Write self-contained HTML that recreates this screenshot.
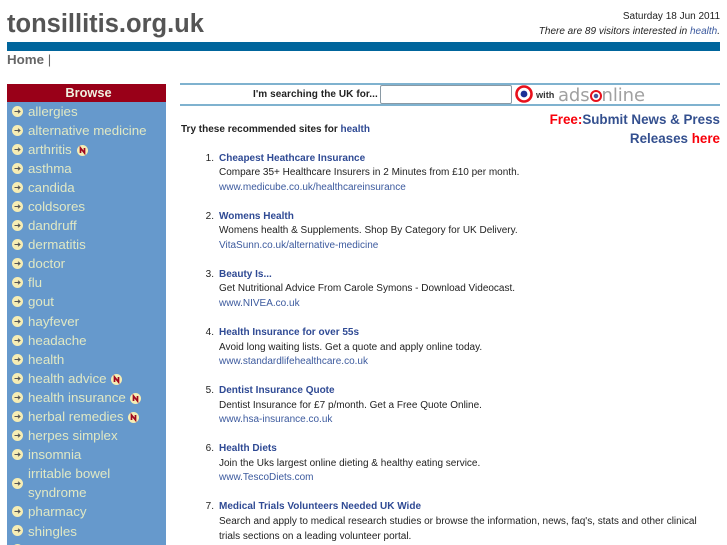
<!DOCTYPE html>
<html><head><meta charset="utf-8"><style>
html,body{margin:0;padding:0;background:#fff;width:727px;height:545px;overflow:hidden;font-family:"Liberation Sans",sans-serif;color:#222}
.a{position:absolute;white-space:nowrap}
#wrap{position:relative;width:727px;height:545px;overflow:hidden}
.s{position:absolute;left:28px;font-size:13.33px;line-height:19px;color:#e0e8c4;white-space:nowrap}
.ic{position:absolute;left:12px;width:11px;height:11px}
.n{position:absolute;width:11px;height:11px}
.t{position:absolute;left:219px;font-size:10px;line-height:14px;font-weight:bold;color:#2f4a94;white-space:nowrap}
.d{position:absolute;left:219px;font-size:10px;line-height:14px;color:#222;white-space:nowrap}
.u{position:absolute;left:219px;font-size:10px;line-height:14px;color:#3c5a9e;white-space:nowrap}
.m{position:absolute;left:190px;width:24px;text-align:right;font-size:10px;line-height:14px;color:#222}
</style></head><body><div id="wrap">
<svg width="0" height="0" style="position:absolute"><defs>
<symbol id="arr" viewBox="0 0 11 11"><circle cx="5.5" cy="5.5" r="5.5" fill="#f6edb4"/><path d="M2.5 5.5H8M6 3.7L8 5.5L6 7.3" fill="none" stroke="#555" stroke-width="1"/></symbol>
<symbol id="new" viewBox="0 0 11 11"><circle cx="5.5" cy="5.5" r="5.5" fill="#f6edb4"/><path d="M3.5 8V3L7.5 8V3" fill="none" stroke="#a00820" stroke-width="1.7"/></symbol>
</defs></svg>

<div class="a" style="left:7px;top:9px;font-size:25.5px;line-height:30px;font-weight:bold;color:#555">tonsillitis.org.uk</div>
<div class="a" style="right:7px;top:10px;font-size:10px;line-height:14px;color:#222">Saturday 18 Jun 2011</div>
<div class="a" style="right:7px;top:25px;font-size:10px;line-height:14px;font-style:italic;color:#222">There are 89 visitors interested in <span style="color:#3c5a9e">health</span>.</div>
<div class="a" style="left:7px;top:42px;width:713px;height:9px;background:#00659c"></div>
<div class="a" style="left:7px;top:52px;font-size:13.33px;line-height:16px;font-weight:bold;color:#666">Home <span style="font-weight:normal">|</span></div>

<div class="a" style="left:7px;top:84px;width:159px;height:461px;background:#6699cc"></div>
<div class="a" style="left:7px;top:84px;width:155px;padding-left:4px;height:18px;background:#990018;color:#f0f0e0;font-size:12.8px;line-height:18px;font-weight:bold;text-align:center">Browse</div>

<div class="s" style="top:102px">allergies</div><svg class="ic" style="top:106px"><use href="#arr"/></svg>
<div class="s" style="top:121px">alternative medicine</div><svg class="ic" style="top:125px"><use href="#arr"/></svg>
<div class="s" style="top:140px">arthritis</div><svg class="ic" style="top:144px"><use href="#arr"/></svg><svg class="n" style="left:77px;top:145px"><use href="#new"/></svg>
<div class="s" style="top:159px">asthma</div><svg class="ic" style="top:163px"><use href="#arr"/></svg>
<div class="s" style="top:178px">candida</div><svg class="ic" style="top:182px"><use href="#arr"/></svg>
<div class="s" style="top:197px">coldsores</div><svg class="ic" style="top:201px"><use href="#arr"/></svg>
<div class="s" style="top:216px">dandruff</div><svg class="ic" style="top:220px"><use href="#arr"/></svg>
<div class="s" style="top:235px">dermatitis</div><svg class="ic" style="top:239px"><use href="#arr"/></svg>
<div class="s" style="top:254px">doctor</div><svg class="ic" style="top:258px"><use href="#arr"/></svg>
<div class="s" style="top:273px">flu</div><svg class="ic" style="top:277px"><use href="#arr"/></svg>
<div class="s" style="top:292px">gout</div><svg class="ic" style="top:296px"><use href="#arr"/></svg>
<div class="s" style="top:312px">hayfever</div><svg class="ic" style="top:316px"><use href="#arr"/></svg>
<div class="s" style="top:331px">headache</div><svg class="ic" style="top:335px"><use href="#arr"/></svg>
<div class="s" style="top:350px">health</div><svg class="ic" style="top:354px"><use href="#arr"/></svg>
<div class="s" style="top:369px">health advice</div><svg class="ic" style="top:373px"><use href="#arr"/></svg><svg class="n" style="left:111px;top:374px"><use href="#new"/></svg>
<div class="s" style="top:388px">health insurance</div><svg class="ic" style="top:392px"><use href="#arr"/></svg><svg class="n" style="left:130px;top:393px"><use href="#new"/></svg>
<div class="s" style="top:407px">herbal remedies</div><svg class="ic" style="top:411px"><use href="#arr"/></svg><svg class="n" style="left:128px;top:412px"><use href="#new"/></svg>
<div class="s" style="top:426px">herpes simplex</div><svg class="ic" style="top:430px"><use href="#arr"/></svg>
<div class="s" style="top:445px">insomnia</div><svg class="ic" style="top:449px"><use href="#arr"/></svg>
<div class="s" style="top:464px">irritable bowel</div>
<div class="s" style="top:483px">syndrome</div><svg class="ic" style="top:478px"><use href="#arr"/></svg>
<div class="s" style="top:502px">pharmacy</div><svg class="ic" style="top:506px"><use href="#arr"/></svg>
<div class="s" style="top:522px">shingles</div><svg class="ic" style="top:525px"><use href="#arr"/></svg>
<div class="s" style="top:541px">slimming</div><svg class="ic" style="top:544px"><use href="#arr"/></svg>

<div class="a" style="left:180px;top:83px;width:540px;height:2px;background:#7fb2cf"></div>
<div class="a" style="left:180px;top:104px;width:540px;height:2px;background:#7fb2cf"></div>
<div class="a" style="left:253px;top:88px;font-size:10px;letter-spacing:.07px;line-height:14px;font-weight:bold;color:#222">I'm searching the UK for...</div>
<div class="a" style="left:380px;top:85px;width:130px;height:17px;border:1px solid #8a9aa5;border-radius:2px;background:#fff"></div>
<svg class="a" style="left:515px;top:85px" width="19" height="19"><circle cx="9" cy="9" r="7.5" fill="#fff" stroke="#e8101c" stroke-width="2.6"/><circle cx="9" cy="9" r="3.4" fill="#1c2f96"/></svg>
<div class="a" style="left:536px;top:88px;font-size:9.2px;line-height:14px;font-weight:bold;color:#333">with</div>
<div class="a" style="left:558px;top:85px;font-family:'DejaVu Sans',sans-serif;font-size:18px;line-height:22px;color:#a0a0a0;letter-spacing:-.1px">ads<span style="display:inline-block;width:12px;height:12px;vertical-align:-1px;border:2px solid #e8101c;border-radius:50%;box-sizing:border-box;background:radial-gradient(circle,#46549a 0 2px,#fff 2.5px)"></span>nline</div>

<div class="a" style="right:7px;top:110px;font-size:13.4px;line-height:19px;font-weight:bold;color:#34508f"><span style="color:#f8000a">Free:</span>Submit News &amp; Press</div>
<div class="a" style="right:7px;top:129px;font-size:13.4px;line-height:19px;font-weight:bold;color:#34508f">Releases <span style="color:#f8000a">here</span></div>

<div class="a" style="left:181px;top:123px;font-size:10px;line-height:14px;font-weight:bold;color:#222">Try these recommended sites for <span style="color:#2f4a94">health</span></div>

<div class="m" style="top:152px">1.</div><div class="t" style="top:152px">Cheapest Heathcare Insurance</div>
<div class="d" style="top:166px">Compare 35+ Healthcare Insurers in 2 Minutes from £10 per month.</div>
<div class="u" style="top:181px">www.medicube.co.uk/healthcareinsurance</div>

<div class="m" style="top:210px">2.</div><div class="t" style="top:210px">Womens Health</div>
<div class="d" style="top:224px">Womens health &amp; Supplements. Shop By Category for UK Delivery.</div>
<div class="u" style="top:239px">VitaSunn.co.uk/alternative-medicine</div>

<div class="m" style="top:268px">3.</div><div class="t" style="top:268px">Beauty Is...</div>
<div class="d" style="top:282px">Get Nutritional Advice From Carole Symons - Download Videocast.</div>
<div class="u" style="top:297px">www.NIVEA.co.uk</div>

<div class="m" style="top:326px">4.</div><div class="t" style="top:326px">Health Insurance for over 55s</div>
<div class="d" style="top:341px">Avoid long waiting lists. Get a quote and apply online today.</div>
<div class="u" style="top:355px">www.standardlifehealthcare.co.uk</div>

<div class="m" style="top:384px">5.</div><div class="t" style="top:384px">Dentist Insurance Quote</div>
<div class="d" style="top:399px">Dentist Insurance for £7 p/month. Get a Free Quote Online.</div>
<div class="u" style="top:413px">www.hsa-insurance.co.uk</div>

<div class="m" style="top:442px">6.</div><div class="t" style="top:442px">Health Diets</div>
<div class="d" style="top:457px">Join the Uks largest online dieting &amp; healthy eating service.</div>
<div class="u" style="top:471px">www.TescoDiets.com</div>

<div class="m" style="top:500px">7.</div><div class="t" style="top:500px">Medical Trials Volunteers Needed UK Wide</div>
<div class="d" style="top:515px">Search and apply to medical research studies or browse the information, news, faq's, stats and other clinical</div>
<div class="d" style="top:530px">trials sections on a leading volunteer portal.</div>
</div></body></html>
